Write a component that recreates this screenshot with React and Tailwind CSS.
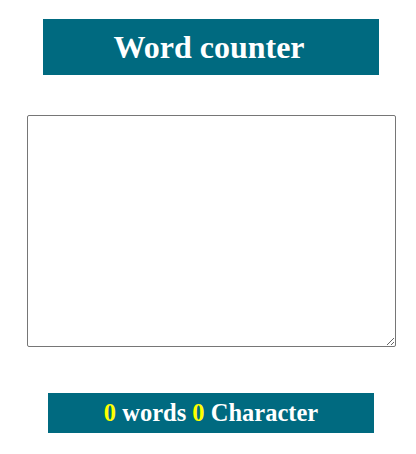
import React, { useState } from "react";

export default function App() {
  const [text, setText] = useState("");
  const words = text.trim() === "" ? 0 : text.trim().split(/\s+/).length;
  const chars = text.length;
  return (
    <div
      className="flex w-[416px] flex-col items-center bg-white pl-[6px] pt-[19px]"
      style={{ fontFamily: '"Liberation Serif", "Times New Roman", serif' }}
    >
      <div className="flex h-[56px] w-[336px] items-center justify-center bg-[#006a80] pr-[4px]">
        <h1 className="text-[32px] font-bold leading-none text-white">Word counter</h1>
      </div>
      <textarea
        value={text}
        onChange={(e) => setText(e.target.value)}
        className="mt-[40px] h-[232px] w-[369px] rounded-[2px] border border-[#767676] bg-white p-[2px] text-[13px]"
      />
      <div className="mt-[46px] flex h-[40px] w-[326px] items-center justify-center bg-[#006a80]">
        <h2 className="text-[24.5px] font-bold leading-none text-white">
          <span className="text-[#ffff00]">{words}</span> words{" "}
          <span className="text-[#ffff00]">{chars}</span> Character
        </h2>
      </div>
    </div>
  );
}
